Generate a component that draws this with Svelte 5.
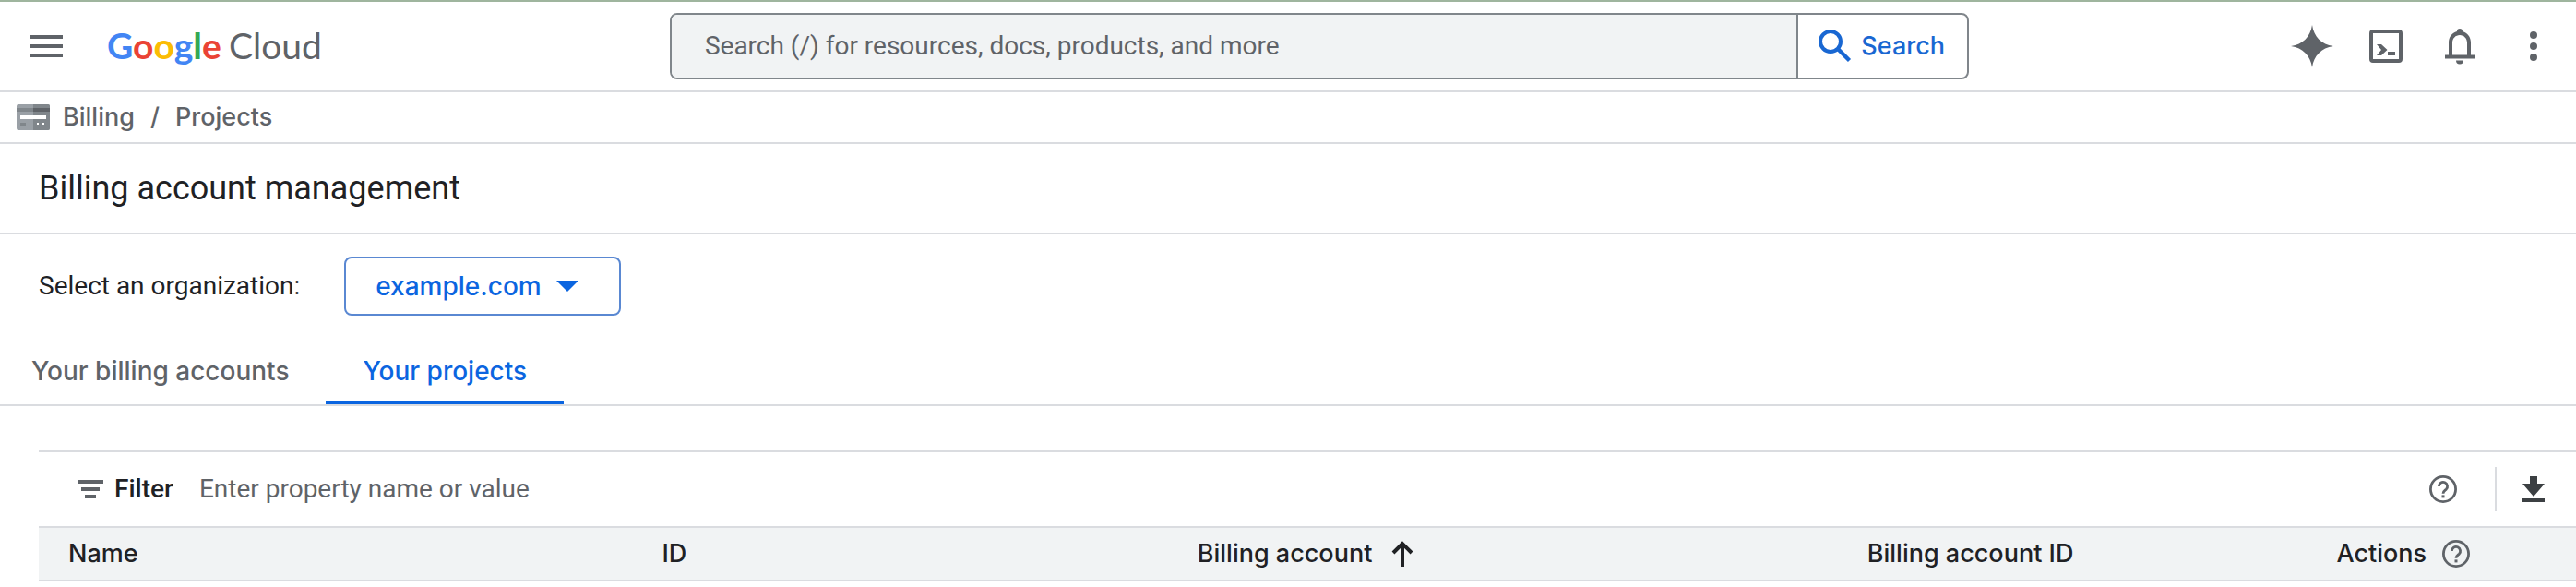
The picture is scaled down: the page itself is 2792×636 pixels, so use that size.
<script lang="ts">
  const orgs = ["example.com"];
  const tabs = ["Your billing accounts", "Your projects"];

  let org = $state(orgs[0]);
  let tab = $state("Your projects");
  let query = $state("");
  let filter = $state("");
</script>

{#snippet helpIcon()}
  <svg class="help" viewBox="0 0 30 30" aria-hidden="true">
    <circle cx="15" cy="15" r="13.6" fill="none" stroke="currentColor" stroke-width="2.8" />
    <path
      d="M10.4 12a4.6 4.6 0 1 1 7.8 3.3c-1.8 1.5-3.2 2.2-3.2 4.4"
      fill="none"
      stroke="currentColor"
      stroke-width="2.8"
    />
    <rect x="13.5" y="21.4" width="3" height="3" fill="currentColor" />
  </svg>
{/snippet}

<header>
  <div class="brand">
    <button class="menu" aria-label="Main menu">
      <svg width="36" height="24" viewBox="0 0 36 24">
        <path d="M0 0h36v4H0zM0 10h36v4H0zM0 20h36v4H0z" fill="currentColor" />
      </svg>
    </button>
    <a class="logo" href="#home">
      <span class="google"
        ><span class="b">G</span><span class="r">o</span><span class="y">o</span><span class="b"
          >g</span
        ><span class="g">l</span><span class="r">e</span></span
      >
      <span>Cloud</span>
    </a>
  </div>

  <form class="search" onsubmit={(e) => e.preventDefault()}>
    <input
      type="text"
      aria-label="Search"
      placeholder="Search (/) for resources, docs, products, and more"
      bind:value={query}
    />
    <button>
      <svg width="36" height="36" viewBox="0 0 36 36" aria-hidden="true">
        <circle cx="13" cy="13" r="11" fill="none" stroke="currentColor" stroke-width="4" />
        <path d="M20.5 20.5l13 13" stroke="currentColor" stroke-width="4.4" />
      </svg>
      Search
    </button>
  </form>

  <div class="actions">
    <button aria-label="Gemini">
      <svg width="46" height="46" viewBox="0 0 46 46">
        <path
          d="M23 0c2 13 10 21 23 23-13 2-21 10-23 23-2-13-10-21-23-23 13-2 21-10 23-23z"
          fill="currentColor"
        />
      </svg>
    </button>
    <button aria-label="Cloud Shell">
      <svg width="36" height="36" viewBox="0 0 36 36">
        <rect x="2" y="2" width="32" height="32" rx="2" fill="none" stroke="currentColor" stroke-width="4" />
        <path d="M8 16h5l6.5 6-6.5 6H8l5-6zM20 24h8v4h-8z" fill="currentColor" />
      </svg>
    </button>
    <button aria-label="Notifications">
      <svg width="32" height="40" viewBox="0 0 32 40">
        <path
          d="M0 29.5h32v4H0zM13 4a3 3 0 0 1 6 0c5.5 1.5 9 6.3 9 12v14h-4V16.5C24 11.5 20.5 8 16 8s-8 3.5-8 8.5V30H4V16C4 10.3 7.5 5.5 13 4zM12 35.5h8a4 4 0 0 1-8 0z"
          fill="currentColor"
        />
      </svg>
    </button>
    <button aria-label="More options">
      <svg width="8" height="32" viewBox="0 0 8 32">
        <circle cx="4" cy="4" r="4" fill="currentColor" />
        <circle cx="4" cy="16" r="4" fill="currentColor" />
        <circle cx="4" cy="28" r="4" fill="currentColor" />
      </svg>
    </button>
  </div>
</header>

<nav class="crumbs" aria-label="Breadcrumb">
  <svg width="36" height="28" viewBox="0 0 36 28" aria-hidden="true">
    <rect width="36" height="28" rx="2" fill="#9aa0a6" />
    <path d="M18 0h16a2 2 0 0 1 2 2v24a2 2 0 0 1-2 2H18z" fill="#80868b" />
    <path d="M0 4h18v4H0z" fill="#80868b" />
    <path d="M18 4h18v4H18z" fill="#5f6368" />
    <path d="M4 12h28v4H4z" fill="#fff" />
    <path d="M4 20h6v4H4z" fill="#80868b" />
    <path d="M22 20h2v2h-2zM28 20h2v2h-2z" fill="#fff" />
  </svg>
  <div class="trail">
    <a href="#billing">Billing</a>
    <span>/</span>
    <a href="#projects">Projects</a>
  </div>
</nav>

<main>
  <h1>Billing account management</h1>

  <div class="org">
    <label for="org">Select an organization:</label>
    <div class="select">
      <select id="org" bind:value={org}>
        {#each orgs as o}
          <option>{o}</option>
        {/each}
      </select>
      <svg width="24" height="12" viewBox="0 0 24 12" aria-hidden="true">
        <path d="M0 0h24L12 12z" fill="currentColor" />
      </svg>
    </div>
  </div>

  <div class="tabs" role="tablist">
    {#each tabs as t}
      <button role="tab" aria-selected={tab === t} class:active={tab === t} onclick={() => (tab = t)}>
        {t}
      </button>
    {/each}
  </div>

  <section>
    <div class="filter">
      <svg width="28" height="20" viewBox="0 0 28 20" aria-hidden="true">
        <path d="M0 0h28v4H0zM4 8h20v4H4zM8 16h12v4H8z" fill="currentColor" />
      </svg>
      <label for="filter">Filter</label>
      <input id="filter" type="text" placeholder="Enter property name or value" bind:value={filter} />
      <button class="info" aria-label="Filter help">{@render helpIcon()}</button>
      <button class="download" aria-label="Download">
        <svg width="24" height="28" viewBox="0 0 24 28">
          <path d="M8 0h8v8h8L12 22 0 8h8zM0 24h24v4H0z" fill="currentColor" />
        </svg>
      </button>
    </div>

    <table>
      <colgroup>
        <col class="name" />
        <col class="id" />
        <col class="account" />
        <col class="account-id" />
        <col />
      </colgroup>
      <thead>
        <tr>
          <th>Name</th>
          <th>ID</th>
          <th aria-sort="ascending">
            <div class="sorted">
              Billing account
              <svg width="24" height="28" viewBox="0 0 24 28" aria-hidden="true">
                <path
                  d="M12 28V4M2 13L12 3l10 10"
                  fill="none"
                  stroke="currentColor"
                  stroke-width="4"
                />
              </svg>
            </div>
          </th>
          <th>Billing account ID</th>
          <th>
            <div>Actions {@render helpIcon()}</div>
          </th>
        </tr>
      </thead>
    </table>
  </section>
</main>

<style>
  :global(body) {
    background: #fff;
    color: #202124;
    font-family: Roboto, "Liberation Sans", sans-serif;
    font-size: 28px;
    line-height: 36px;
  }

  button,
  input,
  select {
    margin: 0;
    padding: 0;
    border: none;
    background: none;
    color: inherit;
    font: inherit;
  }

  button,
  select {
    cursor: pointer;
  }

  svg {
    display: block;
    flex: none;
  }

  a {
    color: inherit;
    text-decoration: none;
  }

  input::placeholder {
    color: #5f6368;
    opacity: 1;
  }

  .search button,
  .crumbs,
  .select select,
  .tabs button,
  th {
    font-family: Inter, Roboto, sans-serif;
    font-size: 27px;
    font-weight: 500;
  }

  header {
    display: grid;
    grid-template-columns: 26% 1fr 658px;
    align-items: center;
    height: 96px;
    border-top: 2px solid #9fb59e;
    border-bottom: 2px solid #dadce0;
    color: #5f6368;
  }

  .brand {
    display: flex;
    align-items: center;
    gap: 48px;
    padding-left: 32px;
  }

  .logo {
    display: flex;
    gap: 8px;
    padding-bottom: 2px;
    font-family: Lato, sans-serif;
    font-size: 39px;
    line-height: 48px;
  }

  .google {
    font-weight: 700;
  }

  .b {
    color: #4285f4;
  }

  .r {
    color: #ea4335;
  }

  .y {
    color: #fbbc04;
  }

  .g {
    color: #34a853;
  }

  .search {
    display: flex;
    box-sizing: border-box;
    height: 72px;
    border: 2px solid #80868b;
    border-radius: 8px;
    overflow: hidden;
  }

  .search input {
    flex: 1;
    min-width: 0;
    padding: 0 36px;
    background: #f1f3f4;
  }

  .search button {
    display: flex;
    align-items: center;
    gap: 10px;
    padding: 0 24px 0 22px;
    border-left: 2px solid #80868b;
    color: #1967d2;
  }

  .actions {
    display: flex;
    justify-content: flex-end;
    padding-right: 6px;
  }

  .actions button {
    display: grid;
    place-items: center;
    width: 80px;
    height: 80px;
  }

  .crumbs {
    display: flex;
    align-items: center;
    gap: 14px;
    height: 54px;
    padding-left: 18px;
    border-bottom: 2px solid #dadce0;
    color: #5f6368;
  }

  .trail {
    display: flex;
    gap: 17px;
  }

  h1 {
    margin: 0;
    padding: 24px 42px;
    border-bottom: 2px solid #dadce0;
    font-size: 36px;
    font-weight: 400;
    line-height: 48px;
  }

  .org {
    display: flex;
    align-items: center;
    gap: 48px;
    padding: 24px 42px;
  }

  .select {
    position: relative;
    color: #0b65e0;
  }

  .select select {
    appearance: none;
    box-sizing: border-box;
    width: 300px;
    height: 64px;
    padding: 0 32px;
    border: 2px solid #5a88d2;
    border-radius: 8px;
    font-size: 28px;
  }

  .select svg {
    position: absolute;
    top: 26px;
    right: 46px;
    pointer-events: none;
  }

  .tabs {
    display: flex;
    border-bottom: 2px solid #dadce0;
  }

  .tabs button {
    padding: 18px 40px 14px;
    border-bottom: 4px solid transparent;
    color: #5f6368;
    font-size: 28px;
  }

  .tabs button:first-child {
    padding-left: 34px;
  }

  .tabs button.active {
    border-color: #0b65e0;
    color: #0b65e0;
  }

  section {
    margin: 48px 0 0 42px;
    border-top: 2px solid #dadce0;
  }

  .filter {
    display: flex;
    align-items: center;
    height: 80px;
    padding-left: 42px;
    color: #5f6368;
  }

  .filter label {
    margin: 0 28px 0 12px;
    color: #202124;
    font-weight: 500;
  }

  .filter input {
    flex: 1;
    min-width: 0;
  }

  .info {
    padding: 0 41px;
  }

  .download {
    display: grid;
    place-items: center;
    width: 88px;
    height: 48px;
    padding-right: 6px;
    border-left: 2px solid #dadce0;
    color: #3c4043;
  }

  .help {
    width: 30px;
    height: 30px;
    color: #5f6368;
  }

  table {
    width: 100%;
    border-collapse: collapse;
    table-layout: fixed;
  }

  .name {
    width: 23.4%;
  }

  .id {
    width: 21.1%;
  }

  .account {
    width: 26.4%;
  }

  .account-id {
    width: 18.5%;
  }

  th {
    height: 56px;
    padding: 0 0 0 32px;
    border-top: 2px solid #dadce0;
    border-bottom: 2px solid #dadce0;
    background: #f1f3f4;
    text-align: left;
  }

  th div {
    display: flex;
    align-items: center;
    gap: 17px;
  }

  th .sorted {
    gap: 21px;
  }
</style>
